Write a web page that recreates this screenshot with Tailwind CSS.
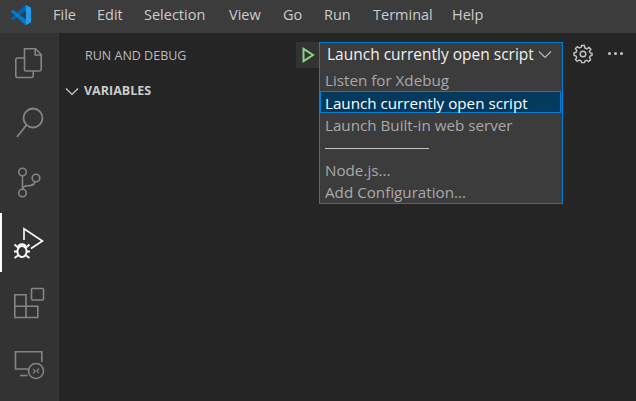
<!DOCTYPE html>
<html lang="en">
<head>
    <meta charset="UTF-8">
    <title>Run and Debug</title>
    <script src="https://cdn.jsdelivr.net/npm/@tailwindcss/browser@4"></script>
</head>
<body class="bg-[#252526] overflow-hidden">
<div class="w-[636px] h-[401px] flex flex-col font-['Open_Sans',sans-serif] overflow-hidden">
    <!-- title bar -->
    <div class="h-[33px] pb-[4px] bg-[#3c3c3c] flex items-center shrink-0 text-[14.5px] text-[#cccccc]">
        <svg class="w-[20px] h-[20px] ml-[11px] mr-[22px]" viewBox="0 0 100 100">
            <path fill="#0065A9" d="M96.4614 10.7962L75.8569 0.875542C73.4719 -0.272773 70.6217 0.211611 68.75 2.08333L1.29858 63.5832C-0.515693 65.2373 -0.513607 68.0937 1.30308 69.7452L6.81272 74.754C8.29793 76.1042 10.5347 76.2036 12.1338 74.9905L93.3609 13.3699C96.086 11.3026 100 13.2462 100 16.6667V16.4275C100 14.0265 98.6246 11.8378 96.4614 10.7962Z"/>
            <path fill="#007ACC" d="M96.4614 89.2038L75.8569 99.1245C73.4719 100.273 70.6217 99.7884 68.75 97.9167L1.29858 36.4168C-0.515693 34.7627 -0.513607 31.9063 1.30308 30.2548L6.81272 25.246C8.29793 23.8958 10.5347 23.7964 12.1338 25.0095L93.3609 86.6301C96.086 88.6974 100 86.7538 100 83.3333V83.5725C100 85.9735 98.6246 88.1622 96.4614 89.2038Z"/>
            <path fill="#1F9CF0" d="M75.8578 99.1263C73.4721 100.274 70.6219 99.7885 68.75 97.9166C71.0564 100.223 75 98.5895 75 95.3278V4.67213C75 1.41039 71.0564 -0.223106 68.75 2.08329C70.6219 0.211402 73.4721 -0.273666 75.8578 0.873633L96.4587 10.7807C98.6234 11.8217 100 14.0112 100 16.4132V83.5871C100 85.9891 98.6234 88.1786 96.4586 89.2196L75.8578 99.1263Z"/>
        </svg>
        <span class="w-[44px]">File</span>
        <span class="w-[47px]">Edit</span>
        <span class="w-[85px]">Selection</span>
        <span class="w-[54px]">View</span>
        <span class="w-[41px]">Go</span>
        <span class="w-[49px]">Run</span>
        <span class="w-[79px]">Terminal</span>
        <span>Help</span>
    </div>
    <div class="flex flex-1 min-h-0">
        <!-- activity bar -->
        <div class="w-[59px] bg-[#333333] pt-[3px] shrink-0 flex flex-col">
            <div class="h-[59px]">
                <svg class="w-[59px] h-[59px]" viewBox="0 0 59 59" fill="none" stroke="#858585" stroke-width="1.6">
                    <path d="M24.5 12.8H35.5L41.2 18.5V33.5C41.2 34.5 40.5 35 39.7 35H26C25 35 24.5 34.5 24.5 33.5Z"/>
                    <path d="M35.2 13V19H41"/>
                    <path d="M24.5 22H17.5C16.5 22 15.8 22.7 15.8 23.7V40C15.8 41 16.5 41.5 17.5 41.5H31.5C32.5 41.5 33.2 41 33.2 40V35"/>
                </svg>
            </div>
            <div class="h-[59px]">
                <svg class="w-[59px] h-[59px]" viewBox="0 0 59 59" fill="none" stroke="#858585" stroke-width="1.8">
                    <circle cx="33" cy="23" r="9.5"/>
                    <path d="M26.5 30L17 42"/>
                </svg>
            </div>
            <div class="h-[59px]">
                <svg class="w-[59px] h-[59px]" viewBox="0 0 59 59" fill="none" stroke="#858585" stroke-width="1.6">
                    <circle cx="22.5" cy="18" r="3.8"/>
                    <circle cx="22.5" cy="39" r="3.8"/>
                    <circle cx="36" cy="24" r="3.8"/>
                    <path d="M22.5 22V35"/>
                    <path d="M35 28C34 31.5 31 31.7 27 31.8C24.5 32 23 33 22.5 35"/>
                </svg>
            </div>
            <div class="h-[59px] relative">
                <div class="absolute left-0 top-0 w-[2px] h-[59px] bg-white"></div>
                <svg class="w-[59px] h-[59px]" viewBox="0 0 59 59" fill="none" stroke="#ffffff" stroke-width="1.6">
                    <path d="M24 27V15.8L42.5 28L31 35.5"/>
                    <ellipse cx="22" cy="38.5" rx="4.6" ry="5.5" stroke-width="1.9"/>
                    <path d="M18.5 33.5C19 30.5 25 30.5 25.5 33.5M14.5 31.5L18 34.5M29.5 31.5L26 34.5M14 38.5H17.5M30 38.5H26.5M14.5 45L18 42.5M29.5 45L26 42.5" stroke-width="1.8"/>
                </svg>
            </div>
            <div class="h-[59px]">
                <svg class="w-[59px] h-[59px]" viewBox="0 0 59 59" fill="none" stroke="#858585" stroke-width="1.6">
                    <rect x="31.5" y="16.5" width="12" height="11.5" rx="1"/>
                    <path d="M14.8 22.8H26V45.5H14.8ZM14.8 34.2H37.8V45.5H26"/>
                </svg>
            </div>
            <div class="h-[59px]">
                <svg class="w-[59px] h-[59px]" viewBox="0 0 59 59" fill="none" stroke="#858585" stroke-width="1.6">
                    <path d="M28 38H15.5V20.8H41.8V31"/>
                    <path d="M20 44.5H27.5"/>
                    <circle cx="36" cy="40" r="7.5"/>
                    <path d="M33 38L35.2 40.2L33 42.5M39 37.5L36.8 39.8L39 42" stroke-width="1.2"/>
                </svg>
            </div>
        </div>
        <!-- side bar -->
        <div class="flex-1 min-w-0">
            <div class="h-[44px] pt-[9px] flex items-start relative">
                <span class="mt-[5px] ml-[26px] w-[211px] text-[12.5px] leading-[18px] text-[#bbbbbb]">RUN AND DEBUG</span>
                <div class="w-[23px] h-[26px] bg-[#333333] flex items-center justify-center">
                    <svg class="w-[14px] h-[16px]" viewBox="0 0 14 16" fill="none" stroke="#89d185" stroke-width="2">
                        <path d="M2.5 1.8V14.2L12 8Z"/>
                    </svg>
                </div>
                <!-- select with open list -->
                <div class="relative w-[244px] h-[26px]">
                    <div class="h-[26px] bg-[#3c3c3c] border border-[#007fd4] flex items-center pl-[7px] text-[15.5px] text-[#f0f0f0]">
                        <span class="whitespace-nowrap">Launch currently open script</span>
                        <svg class="absolute right-[11px] top-[8px] w-[14px] h-[9px]" viewBox="0 0 14 9" fill="none" stroke="#bbbbbb" stroke-width="1.1">
                            <path d="M1 1.5L7 7.5L13 1.5"/>
                        </svg>
                    </div>
                    <div class="absolute left-0 top-[25px] w-[244px] h-[137px] pt-[1px] bg-[#3c3c3c] border border-[#007fd4] border-t-0 text-[15.2px] text-[#a9a9a9] flex flex-col">
                        <div class="h-[22.5px] pt-[2px] pl-[5px] flex items-center whitespace-nowrap">Listen for Xdebug</div>
                        <div class="h-[22.5px] pt-[3px] mr-[1px] pl-[4px] flex items-center whitespace-nowrap bg-[#04395e] border border-[#007fd4] text-white">Launch currently open script</div>
                        <div class="h-[22.5px] pt-[2px] pl-[5px] flex items-center whitespace-nowrap">Launch Built-in web server</div>
                        <div class="h-[22.5px] pt-[4px] pl-[5px] flex items-center">
                            <div class="w-[104px] h-px bg-[#c4c4c4]"></div>
                        </div>
                        <div class="h-[22.5px] pt-[2px] pl-[5px] flex items-center whitespace-nowrap">Node.js...</div>
                        <div class="h-[22.5px] pt-[1px] pl-[5px] flex items-center whitespace-nowrap">Add Configuration...</div>
                    </div>
                </div>
                <svg class="w-[20px] h-[20px] ml-[10px] mt-[2px]" viewBox="0 0 20 20" fill="none" stroke="#c5c5c5" stroke-width="1.4">
                    <path d="M8.6 1.5H11.4L11.9 4L13.9 4.9L16 3.4L17.9 5.4L16.4 7.4L17.3 9L19 9.4V11.2L17.2 12L16.5 13.6L17.6 15.8L15.6 17.6L13.7 16.2L12 17L11.4 18.6H8.6L8 16.7L6.2 16L4.2 17.4L2.4 15.5L3.7 13.6L3 12L1 11.3V8.8L3 8.3L3.8 6.5L2.4 4.6L4.4 2.7L6.3 4L8.1 3.3Z"/>
                    <circle cx="10" cy="10" r="2.8"/>
                </svg>
                <div class="ml-[15px] mt-[10px] flex gap-[3px]">
                    <div class="w-[3px] h-[3px] rounded-full bg-[#c5c5c5]"></div>
                    <div class="w-[3px] h-[3px] rounded-full bg-[#c5c5c5]"></div>
                    <div class="w-[3px] h-[3px] rounded-full bg-[#c5c5c5]"></div>
                </div>
            </div>
            <div class="h-[28px] flex items-center">
                <svg class="w-[14px] h-[9px] ml-[6px] mr-[5px]" viewBox="0 0 14 9" fill="none" stroke="#cccccc" stroke-width="1.2">
                    <path d="M1 1.5L7 7.5L13 1.5"/>
                </svg>
                <span class="text-[12.5px] font-bold text-[#cccccc]">VARIABLES</span>
            </div>
        </div>
    </div>
</div>
</body>
</html>
